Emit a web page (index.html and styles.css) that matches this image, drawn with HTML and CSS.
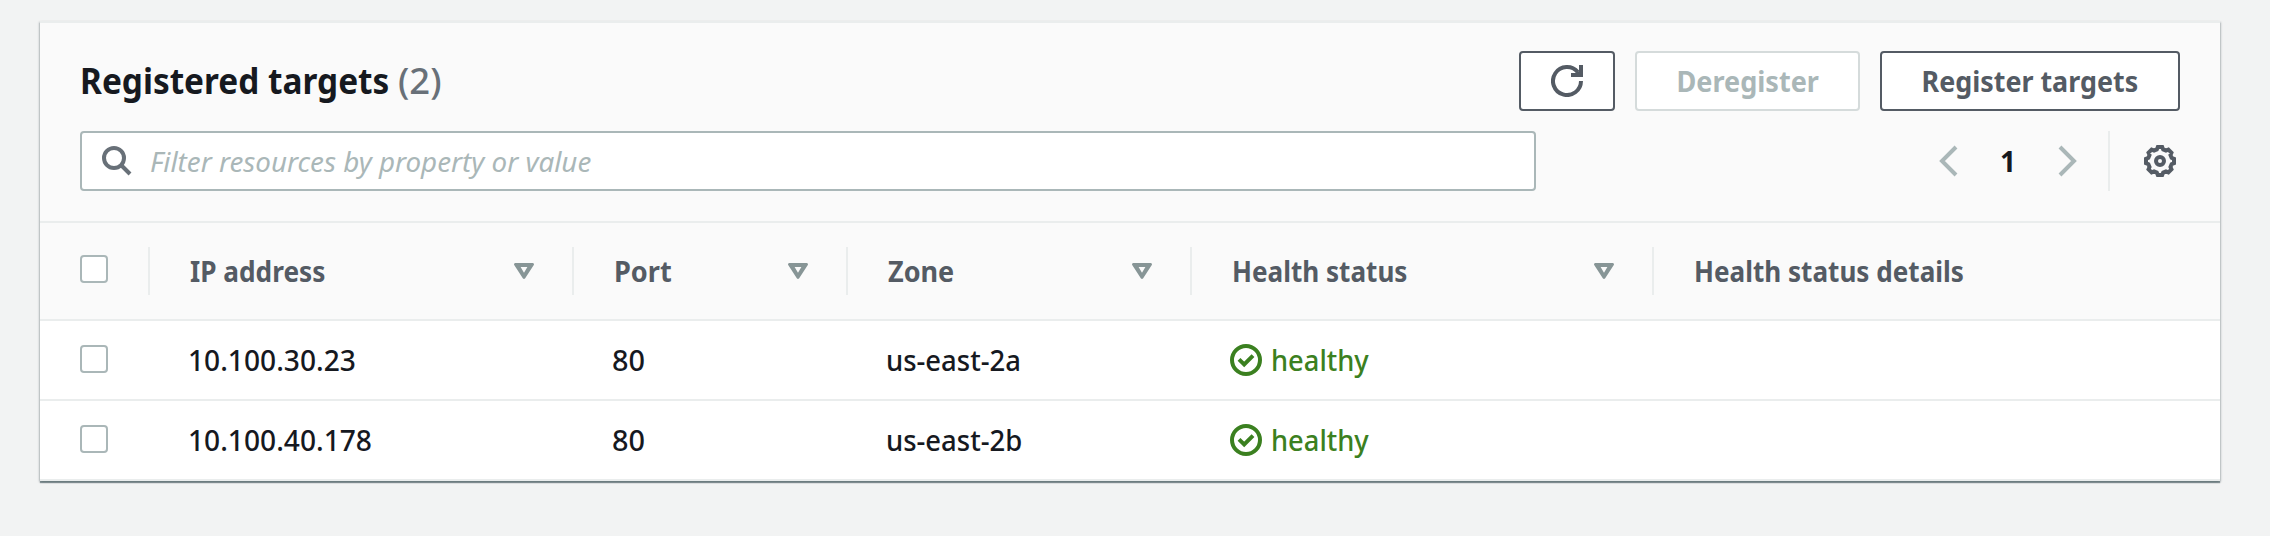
FILE: index.html
```html
<!DOCTYPE html>
<html lang="en">
<head>
<meta charset="utf-8">
<title>Registered targets</title>
<link rel="stylesheet" href="styles.css">
</head>
<body>
<svg class="sprite" aria-hidden="true">
  <symbol id="sort" viewBox="0 0 20 16"><path fill-rule="evenodd" d="M1.200 0h17.600q1.700.4 1 2L11.200 15.300q-1.200 1.200-2.400 0L.2 2q-.7-1.600 1-2zM6.600 4L10 9.800 13.400 4z" fill="currentColor"/></symbol>
  <symbol id="ok" viewBox="0 0 32 32"><g fill="none" stroke="currentColor" stroke-width="4"><circle cx="16" cy="16" r="14"/><path d="M9 15.300l5.200 5.200 8.800-8.800"/></g></symbol>
</svg>
<section class="card">
  <header class="card-header">
    <div class="title-row">
      <h2 class="title"><span class="title-text">Registered targets</span><span class="count">(2)</span></h2>
      <div class="actions">
        <button class="btn btn-icon" aria-label="Refresh">
          <svg width="32" height="32" viewBox="0 0 32 32"><path d="M30 16a14 14 0 1 1-3.200-8.900" fill="none" stroke="currentColor" stroke-width="4"/><path d="M28 0h4v12H20V8h4l4-2z" fill="currentColor"/></svg>
        </button>
        <button class="btn btn-deregister" disabled><span>Deregister</span></button>
        <button class="btn btn-register"><span>Register targets</span></button>
      </div>
    </div>
    <div class="tools-row">
      <div class="search">
        <svg width="30" height="30" viewBox="0 0 30 30" fill="none" stroke="currentColor" stroke-width="4"><circle cx="12" cy="12" r="10"/><path d="M19 19l9 9"/></svg>
        <span class="placeholder">Filter resources by property or value</span>
      </div>
      <div class="pager">
        <svg class="chevron" width="20" height="32" viewBox="0 0 20 32"><path d="M18 2L4 16l14 14"/></svg>
        <span class="page">1</span>
        <svg class="chevron" width="20" height="32" viewBox="0 0 20 32"><path d="M2 2l14 14L2 30"/></svg>
        <span class="divider"></span>
        <svg class="gear" width="32" height="32" viewBox="-16 -16 32 32" fill="none" stroke="currentColor" stroke-width="4"><path d="M-3.200-11.600L-2.200-14H2.200L3.200-11.600L5.940-10.470L8.340-11.460L11.460-8.340L10.470-5.940L11.600-3.200L14-2.200V2.200L11.600 3.200L10.470 5.940L11.460 8.340L8.340 11.460L5.940 10.470L3.200 11.600L2.200 14H-2.200L-3.200 11.600L-5.940 10.470L-8.340 11.460L-11.460 8.340L-10.470 5.940L-11.600 3.200L-14 2.200V-2.200L-11.600-3.200L-10.470-5.940L-11.460-8.340L-8.340-11.460L-5.940-10.470Z"/><circle r="4"/></svg>
      </div>
    </div>
  </header>
  <div class="row head">
    <div class="check"><span class="box"></span></div>
    <div class="cell"><span class="t-ip">IP address</span><svg class="sort"><use href="#sort"/></svg></div>
    <div class="cell"><span class="t-port">Port</span><svg class="sort"><use href="#sort"/></svg></div>
    <div class="cell"><span class="t-zone">Zone</span><svg class="sort"><use href="#sort"/></svg></div>
    <div class="cell"><span class="t-health">Health status</span><svg class="sort"><use href="#sort"/></svg></div>
    <div class="cell"><span class="t-health">Health status details</span></div>
  </div>
  <div class="row">
    <div class="check"><span class="box"></span></div>
    <div class="cell"><span class="v-ip">10.100.30.23</span></div>
    <div class="cell"><span class="v-port">80</span></div>
    <div class="cell"><span class="v-zone">us-east-2a</span></div>
    <div class="cell healthy"><svg class="ok"><use href="#ok"/></svg><span>healthy</span></div>
    <div class="cell"></div>
  </div>
  <div class="row">
    <div class="check"><span class="box"></span></div>
    <div class="cell"><span class="v-ip">10.100.40.178</span></div>
    <div class="cell"><span class="v-port">80</span></div>
    <div class="cell"><span class="v-zone">us-east-2b</span></div>
    <div class="cell healthy"><svg class="ok"><use href="#ok"/></svg><span>healthy</span></div>
    <div class="cell"></div>
  </div>
</section>
</body>
</html>
```
FILE: styles.css
```css
* { box-sizing: border-box; }
body {
  margin: 0;
  min-height: 536px;
  padding: 21px 50px 0 40px;
  background: #f2f3f3;
  color: #16191f;
  font: 500 28px/40px "Noto Sans", "Open Sans", sans-serif;
}
svg { display: block; flex: none; }
span { white-space: nowrap; }
.sprite { position: absolute; width: 0; height: 0; }

.card {
  height: 460px;
  background: #fff;
  border-top: 2px solid #eaeded;
  box-shadow: 0 2px 1px 0 rgba(0, 28, 36, .4), 1px 1px 2px 0 rgba(0, 28, 36, .2), -1px 1px 2px 0 rgba(0, 28, 36, .2);
}
.card-header {
  height: 200px;
  padding: 28px 40px 0;
  background: #fafafa;
  border-bottom: 2px solid #eaeded;
}
.title-row, .tools-row, .actions, .pager, .title { display: flex; align-items: center; }
.title-row, .tools-row { justify-content: space-between; height: 60px; }
.tools-row { margin-top: 20px; }
.title { margin: 0; font-size: 36px; }
.title-text { width: 318px; transform: scaleX(.927); transform-origin: left; }
.count { font-weight: 500; color: #687078; transform: scaleX(1.01); transform-origin: left; }

.actions { gap: 20px; }
.btn {
  display: flex;
  align-items: center;
  justify-content: center;
  height: 60px;
  padding: 0;
  background: #fff;
  border: 2px solid #545b64;
  border-radius: 4px;
  color: #545b64;
  font: inherit;
  font-weight: 700;
}
.btn:disabled { border-color: #d5dbdb; color: #aab7b8; }
.btn-icon { width: 96px; }
.btn-deregister { width: 225px; }
.btn-deregister span { transform: scaleX(.966); }
.btn-register { width: 300px; }
.btn-register span { transform: scaleX(.96); }

.search {
  display: flex;
  align-items: center;
  gap: 18px;
  width: 1456px;
  height: 60px;
  padding-left: 20px;
  background: #fff;
  border: 2px solid #aab7b8;
  border-radius: 4px;
  color: #687078;
}
.placeholder { width: 445px; font-style: italic; font-weight: 400; color: #aab7b8; transform: scaleX(.992); transform-origin: left; }

.pager { padding-right: 4px; }
.chevron { fill: none; stroke: #aab7b8; stroke-width: 4; }
.page { width: 100px; text-align: center; font-weight: 700; padding-bottom: 1px; }
.divider { width: 2px; height: 60px; margin: 0 34px 0 30px; background: #eaeded; }
.gear { color: #545b64; }

.row {
  display: grid;
  grid-template-columns: 108px 424px 274px 344px 462px 1fr;
  align-items: center;
  height: 80px;
  border-bottom: 2px solid #eaeded;
}
.head {
  height: 98px;
  background: #fafafa;
  color: #545b64;
  font-weight: 700;
}
.check { display: flex; padding: 0 0 2px 40px; }
.head .check { padding-bottom: 4px; }
.box { width: 28px; height: 28px; background: #fff; border: 2px solid #aab7b8; border-radius: 4px; }
.cell { display: flex; align-items: center; justify-content: space-between; height: 48px; padding: 0 38px 0 40px; }
.head .cell { border-left: 2px solid #eaeded; }
.cell span { transform-origin: left; }
.sort { width: 20px; height: 16px; color: #879596; }
.t-ip { transform: scaleX(.937); }
.t-port { transform: scaleX(.97); }
.t-zone { transform: scaleX(.965); }
.t-health { transform: scaleX(.932); }
.v-ip { transform: scaleX(1.005); }
.v-port { transform: scaleX(1.03); }
.v-zone { transform: scaleX(.98); }
.healthy { justify-content: flex-start; gap: 9px; color: #3b8020; }
.healthy span { transform: scaleX(.975); }
.ok { width: 32px; height: 32px; }
```
